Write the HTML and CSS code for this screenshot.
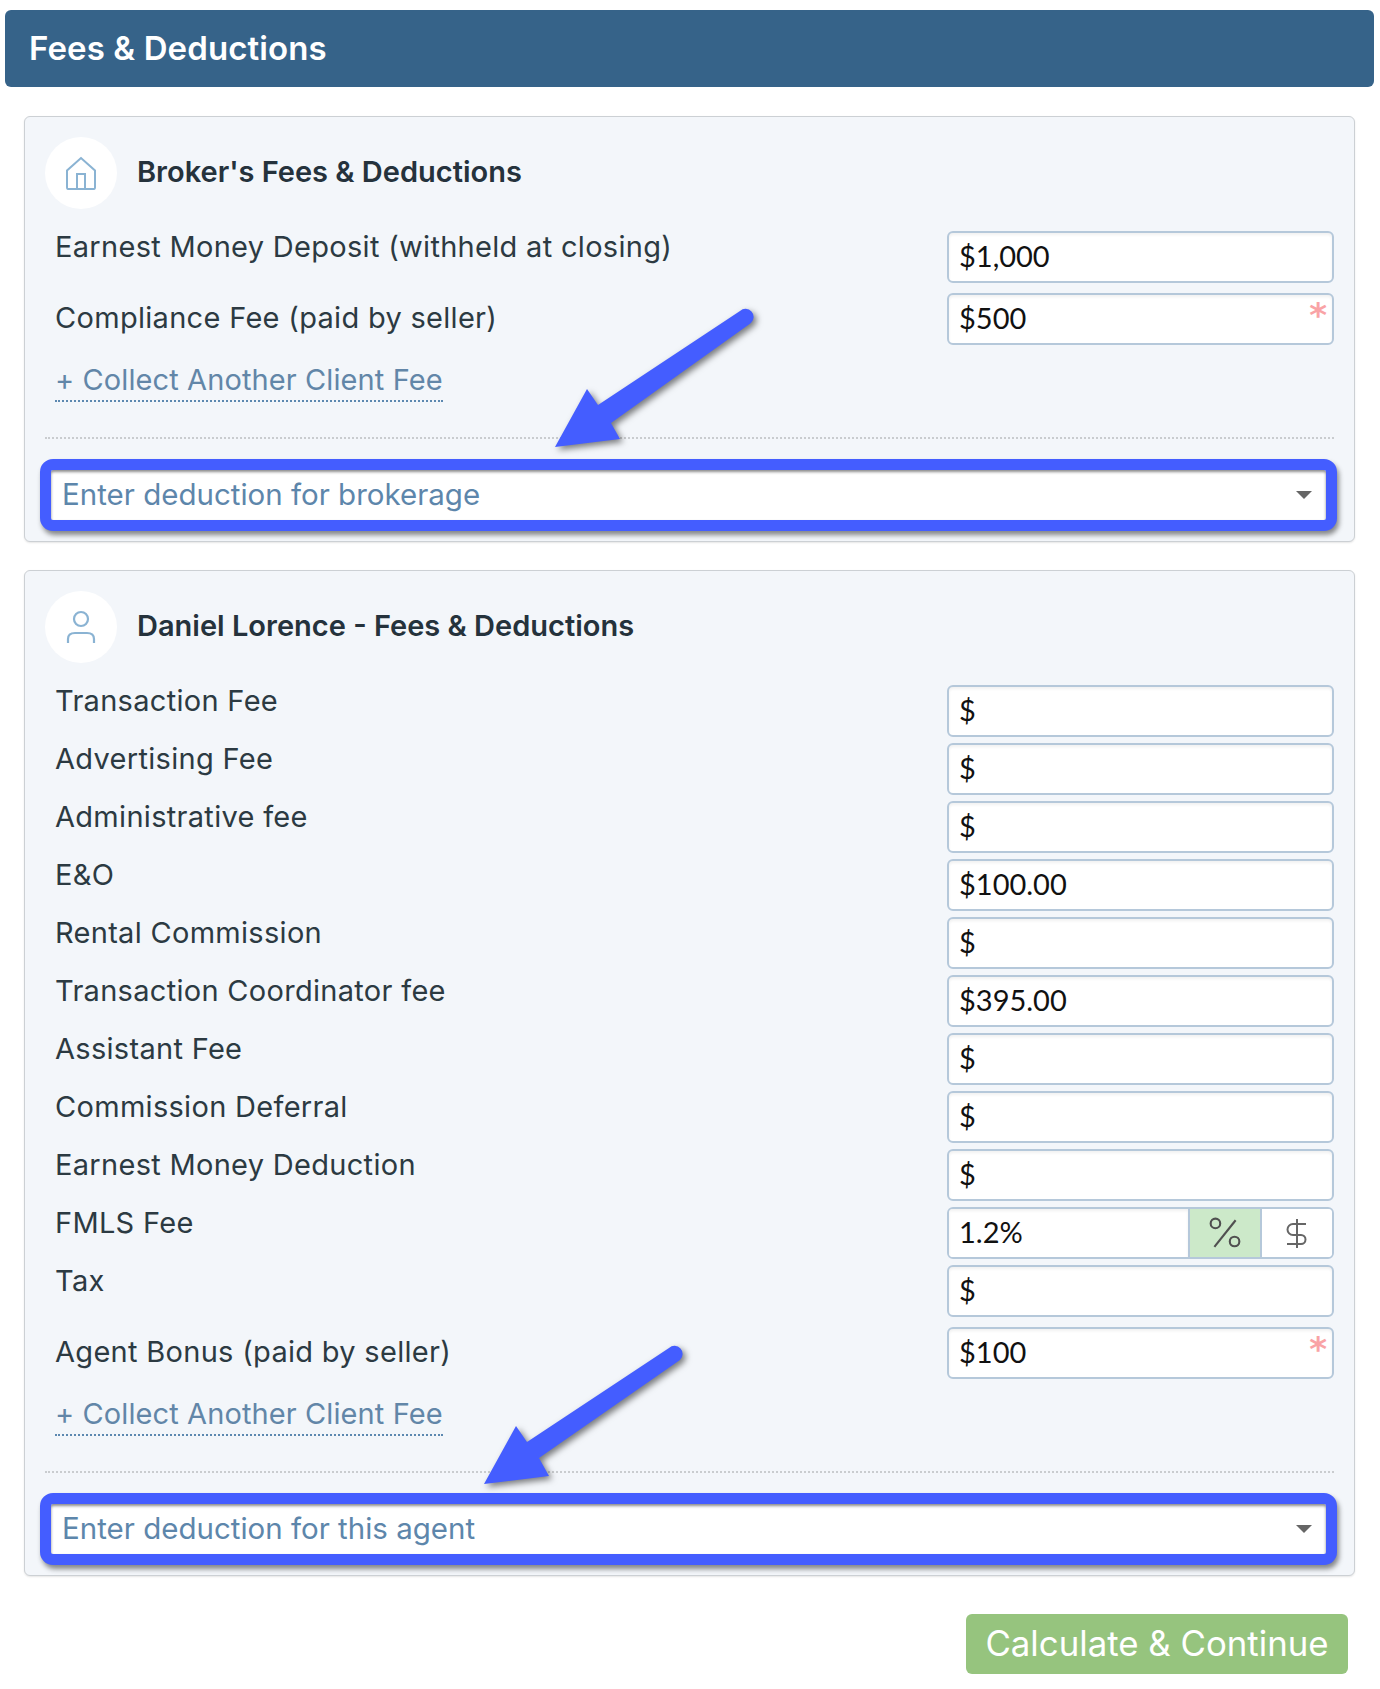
FILE: index.html
```html
<!DOCTYPE html>
<html lang="en">
<head>
    <meta charset="UTF-8">
    <meta name="viewport" content="width=device-width, initial-scale=1.0">
    <title>Fees &amp; Deductions</title>
    <link rel="stylesheet" href="styles.css">
</head>
<body>

<div class="page">
    <h1 class="page-title">Fees &amp; Deductions</h1>

    <section class="card card-broker">
        <div class="card-head">
            <div class="avatar">
                <svg width="32" height="34" viewBox="0 0 32 34" fill="none" stroke="#8ab3d3" stroke-width="2">
                    <path d="M3 33h26c1 0 1-1 1-2V14.500L16 2 2 14.500V31c0 1 0 2 1 2z"/>
                    <path d="M12 33V18h8v15"/>
                </svg>
            </div>
            <h2>Broker's Fees &amp; Deductions</h2>
        </div>

        <div class="fields">
            <div class="field">
                <label>Earnest Money Deposit (withheld at closing)</label>
                <input type="text" value="$1,000">
            </div>
            <div class="field field-required">
                <label>Compliance Fee (paid by seller)</label>
                <div class="input-wrap">
                    <input type="text" value="$500">
                    <span class="req">*</span>
                </div>
            </div>
        </div>

        <a class="add-fee" href="#">+ Collect Another Client Fee</a>
        <hr class="divider">
        <div class="picker">
            <span>Enter deduction for brokerage</span>
            <i class="caret"></i>
        </div>

        <svg class="arrow arrow-broker" width="210" height="150" viewBox="550 305 210 150">
            <path d="M598 405L740 311A8 8 0 0 1 751 323L611 423L620 439L555 447L587 389Z" fill="#445dff"/>
        </svg>
    </section>

    <section class="card card-agent">
        <div class="card-head">
            <div class="avatar">
                <svg width="32" height="34" viewBox="0 0 32 34" fill="none" stroke="#8ab3d3" stroke-width="2.200">
                    <circle cx="16" cy="9" r="7"/>
                    <path d="M3 33v-4c0-4 3-6 7-6h12c4 0 7 2 7 6v4"/>
                </svg>
            </div>
            <h2>Daniel Lorence - Fees &amp; Deductions</h2>
        </div>

        <div class="fields">
            <div class="field"><label>Transaction Fee</label><input type="text" value="$"></div>
            <div class="field"><label>Advertising Fee</label><input type="text" value="$"></div>
            <div class="field"><label>Administrative fee</label><input type="text" value="$"></div>
            <div class="field"><label>E&amp;O</label><input type="text" value="$100.00"></div>
            <div class="field"><label>Rental Commission</label><input type="text" value="$"></div>
            <div class="field"><label>Transaction Coordinator fee</label><input type="text" value="$395.00"></div>
            <div class="field"><label>Assistant Fee</label><input type="text" value="$"></div>
            <div class="field"><label>Commission Deferral</label><input type="text" value="$"></div>
            <div class="field"><label>Earnest Money Deduction</label><input type="text" value="$"></div>
            <div class="field">
                <label>FMLS Fee</label>
                <div class="toggle-input">
                    <input type="text" value="1.2%">
                    <button class="unit unit-on" type="button" aria-label="Percent">
                        <svg width="34" height="32" viewBox="0 0 32 30" fill="none" stroke="#505050" stroke-width="2">
                            <circle cx="7" cy="6" r="4.500"/>
                            <circle cx="25" cy="23" r="4.500"/>
                            <path d="M26 3L6 28"/>
                        </svg>
                    </button>
                    <button class="unit" type="button" aria-label="Dollars">
                        <svg width="24" height="32" viewBox="0 0 24 32" fill="none" stroke="#666" stroke-width="2">
                            <path d="M21 7H8a5 5 0 0 0 0 11h8a4.500 4.500 0 0 1 0 9H2M12 2v29"/>
                        </svg>
                    </button>
                </div>
            </div>
            <div class="field"><label>Tax</label><input type="text" value="$"></div>
            <div class="field field-required">
                <label>Agent Bonus (paid by seller)</label>
                <div class="input-wrap">
                    <input type="text" value="$100">
                    <span class="req">*</span>
                </div>
            </div>
        </div>

        <a class="add-fee" href="#">+ Collect Another Client Fee</a>
        <hr class="divider">
        <div class="picker">
            <span>Enter deduction for this agent</span>
            <i class="caret"></i>
        </div>

        <svg class="arrow arrow-agent" width="210" height="150" viewBox="480 1340 210 150">
            <path d="M527 1441L669 1347A8 8 0 0 1 680 1359L539 1457L549 1475L484 1483L516 1425Z" fill="#445dff"/>
        </svg>
    </section>

    <div class="actions">
        <button class="btn-continue" type="button">Calculate &amp; Continue</button>
    </div>
</div>

</body>
</html>
```
FILE: styles.css
```css
* {
    box-sizing: border-box;
}
body {
    margin: 0;
    font-family: Inter, "Open Sans", sans-serif;
    background-color: #fff;
    color: #2c3a42;
}
.page {
    padding: 10px 6px 15px 5px;
}
.page-title {
    margin: 0 0 29px;
    height: 77px;
    padding-left: 24px;
    background-color: #366389;
    border-radius: 6px;
    color: #fff;
    font-size: 33px;
    font-weight: 600;
    line-height: 76px;
    letter-spacing: 0.1px;
}
.card {
    position: relative;
    margin: 0 19px 28px 19px;
    padding: 20px 20px 10px;
    background-color: #f3f6fa;
    border: 1px solid #ccd0d4;
    border-radius: 6px;
    box-shadow: 0 1px 2px rgba(0, 0, 0, 0.1);
}
.card-head {
    display: flex;
    align-items: center;
    gap: 20px;
    margin-bottom: 22px;
}
.card-head h2 {
    margin: -3px 0 0;
    font-size: 29px;
    font-weight: 600;
    color: #25323c;
}
.avatar {
    display: flex;
    justify-content: center;
    align-items: center;
    width: 72px;
    height: 72px;
    background-color: #fff;
    border-radius: 50%;
}
.fields {
    display: flex;
    flex-direction: column;
    gap: 6px;
}
.field {
    display: flex;
    justify-content: space-between;
    height: 52px;
}
.field label {
    padding-left: 10px;
    font-size: 29px;
    line-height: 32px;
    letter-spacing: 0.3px;
}
.field-required {
    align-items: center;
    margin-top: 4px;
}
.field-required label {
    margin-top: -2px;
}
.field input,
.toggle-input {
    width: 387px;
    height: 52px;
    background-color: #fff;
    border: 2px solid #b5c8da;
    border-radius: 6px;
    box-shadow: inset 0 2px 3px rgba(0, 0, 0, 0.06);
}
.field input {
    padding: 0 10px 4px;
    font-family: Lato, sans-serif;
    font-size: 29px;
    color: #111;
    outline: none;
}
.input-wrap {
    position: relative;
}
.req {
    position: absolute;
    top: 2px;
    right: 7px;
    font-family: "DejaVu Sans", sans-serif;
    font-size: 34px;
    font-weight: 700;
    line-height: 40px;
    color: #f9a3a6;
}
.toggle-input {
    display: flex;
    overflow: hidden;
}
.toggle-input input {
    flex: 1;
    width: auto;
    min-width: 0;
    height: 48px;
    border: none;
    border-radius: 0;
}
.unit {
    display: flex;
    justify-content: center;
    align-items: center;
    width: 72px;
    padding: 0;
    background-color: #fff;
    border: none;
    border-left: 2px solid #b5c8da;
}
.unit-on {
    background-color: #cce9c9;
}
.add-fee {
    display: inline-block;
    margin: 17px 0 0 10px;
    height: 40px;
    color: #6286a8;
    font-size: 29px;
    line-height: 36px;
    letter-spacing: 0.1px;
    text-decoration: none;
    border-bottom: 2px dotted #5c88b0;
}
.divider {
    margin: 35px 0 20px;
    height: 0;
    border: none;
    border-top: 2px dotted #c9cccf;
}
.picker {
    display: flex;
    justify-content: space-between;
    align-items: center;
    margin: 0 -3px 0 -5px;
    height: 72px;
    padding: 0 14px 2px 11px;
    background-color: #fff;
    border: 11px solid #445dff;
    border-radius: 13px;
    color: #5d86ab;
    font-size: 29.500px;
    box-shadow: 2px 4px 5px rgba(0, 0, 0, 0.45), inset 0 2px 3px rgba(0, 0, 0, 0.45);
}
.caret {
    width: 0;
    height: 0;
    margin-top: 2px;
    border-left: 8px solid transparent;
    border-right: 8px solid transparent;
    border-top: 8px solid #666;
}
.arrow {
    position: absolute;
    overflow: visible;
    filter: drop-shadow(3px 3px 3px rgba(0, 0, 0, 0.5));
}
.arrow-broker {
    left: 525px;
    top: 188px;
}
.arrow-agent {
    left: 455px;
    top: 770px;
}
.actions {
    display: flex;
    justify-content: flex-end;
    margin-top: 38px;
    padding-right: 26px;
}
.btn-continue {
    width: 382px;
    height: 60px;
    padding: 0 0 3px;
    background-color: #96c47e;
    border: none;
    border-radius: 6px;
    color: #fff;
    font-family: inherit;
    font-size: 34.800px;
}
```
